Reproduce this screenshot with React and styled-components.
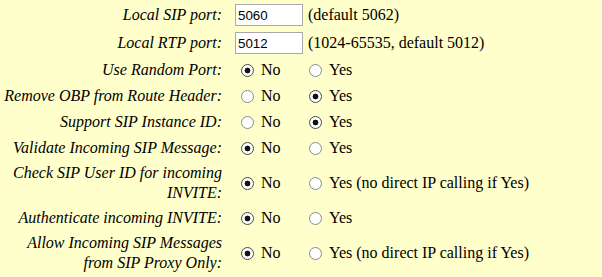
import React from "react";
import styled, { createGlobalStyle } from "styled-components";

const SERIF = '"Liberation Serif", Tinos, serif';
const SANS = '"Liberation Sans", sans-serif';

const Global = createGlobalStyle`
  html, body { margin: 0; padding: 0; background: #ffffcc; }
`;

const Form = styled.div`
  display: grid;
  grid-template-columns: 222px 1fr;
  column-gap: 13px;
  row-gap: 2px;
  padding-top: 2px;
  font: 16px/20px ${SERIF};
  color: #000;
`;

const Label = styled.div`
  font: italic 16px/20px ${SERIF};
  text-align: right;
  min-height: ${(p) => p.$h}px;
  display: flex;
  align-items: center;
  justify-content: flex-end;
  white-space: nowrap;
`;

const Value = styled.div`
  font: 16px/20px ${SERIF};
  display: flex;
  align-items: center;
  min-height: ${(p) => p.$h}px;
  white-space: nowrap;
`;

const TextInput = styled.input`
  box-sizing: border-box;
  width: 68px;
  height: 22px;
  margin: 0 5px 0 0;
  padding: 1px 2px;
  border: 1px solid #a9a9a9;
  background: #fff;
  font-family: ${SANS};
  font-size: 13.33px;
  color: #000;
  outline: none;
`;

const Option = styled.label`
  display: inline-flex;
  align-items: center;
  min-width: ${(p) => p.$w || 0}px;
`;

const Radio = styled.input.attrs({ type: "radio" })`
  appearance: none;
  -webkit-appearance: none;
  box-sizing: border-box;
  width: 13px;
  height: 13px;
  margin: 0 7px 0 6px;
  border-radius: 50%;
  border: 1px solid #8a8a8a;
  background: #fff;
  flex: none;
  &:checked {
    border-color: #4a4a4a;
    background: radial-gradient(circle, #111 0 2.6px, #fff 3.2px);
  }
`;

const rows = [
  { label: "Local SIP port:", type: "text", value: "5060", note: "(default 5062)", h: 26 },
  { label: "Local RTP port:", type: "text", value: "5012", note: "(1024-65535, default 5012)", h: 26 },
  { label: "Use Random Port:", type: "radio", checked: "no", h: 24 },
  { label: "Remove OBP from Route Header:", type: "radio", checked: "yes", h: 24 },
  { label: "Support SIP Instance ID:", type: "radio", checked: "yes", h: 24 },
  { label: "Validate Incoming SIP Message:", type: "radio", checked: "no", h: 24 },
  { label: ["Check SIP User ID for incoming", "INVITE:"], type: "radio", checked: "no", yes: "Yes (no direct IP calling if Yes)", h: 42 },
  { label: "Authenticate incoming INVITE:", type: "radio", checked: "no", h: 24 },
  { label: ["Allow Incoming SIP Messages", "from SIP Proxy Only:"], type: "radio", checked: "no", yes: "Yes (no direct IP calling if Yes)", h: 42 },
];

export default function App() {
  return (
    <>
      <Global />
      <Form>
        {rows.map((r, i) => (
          <React.Fragment key={i}>
            <Label $h={r.h}>
              <span>
                {Array.isArray(r.label)
                  ? r.label.map((l, j) => (
                      <React.Fragment key={j}>
                        {j > 0 && <br />}
                        {l}
                      </React.Fragment>
                    ))
                  : r.label}
              </span>
            </Label>
            <Value $h={r.h}>
              {r.type === "text" ? (
                <>
                  <TextInput defaultValue={r.value} />
                  {r.note}
                </>
              ) : (
                <>
                  <Option $w={68}>
                    <Radio name={`r${i}`} defaultChecked={r.checked === "no"} />
                    No
                  </Option>
                  <Option>
                    <Radio name={`r${i}`} defaultChecked={r.checked === "yes"} />
                    {r.yes || "Yes"}
                  </Option>
                </>
              )}
            </Value>
          </React.Fragment>
        ))}
      </Form>
    </>
  );
}
